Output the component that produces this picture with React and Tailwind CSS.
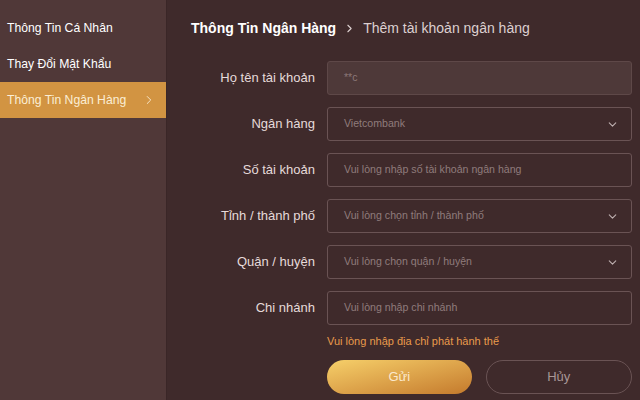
import { ChevronRight, ChevronDown } from 'lucide-react'

const MENU = ['Thông Tin Cá Nhân', 'Thay Đổi Mật Khẩu', 'Thông Tin Ngân Hàng']

const FIELDS = [
  { label: 'Họ tên tài khoản', value: '**c', disabled: true },
  { label: 'Ngân hàng', value: 'Vietcombank', select: true },
  { label: 'Số tài khoản', value: 'Vui lòng nhập số tài khoản ngân hàng' },
  { label: 'Tỉnh / thành phố', value: 'Vui lòng chọn tỉnh / thành phố', select: true },
  { label: 'Quận / huyện', value: 'Vui lòng chọn quận / huyện', select: true },
  { label: 'Chi nhánh', value: 'Vui lòng nhập chi nhánh' },
]

export default function App() {
  return (
    <div
      className="w-[640px] h-[400px] flex bg-[#3f2a2b] overflow-hidden"
      style={{ fontFamily: '"Liberation Sans", Arial, sans-serif' }}
    >
      {/* Sidebar */}
      <div className="w-[167px] shrink-0 bg-[#503838] pt-[10px] border-r border-[#3a2627]">
        {MENU.map((item, i) => {
          const active = i === 2
          return (
            <div
              key={item}
              className={`h-9 flex items-center justify-between pl-[7px] pr-[10px] text-[12.2px] ${
                active ? 'bg-[#d29442] text-[#fbeed5]' : 'text-white'
              }`}
            >
              <span>{item}</span>
              {active && <ChevronRight size={14} strokeWidth={1.5} />}
            </div>
          )
        })}
      </div>

      {/* Main */}
      <div className="flex-1 pl-6 pr-2">
        <div className="h-[58px] flex items-center gap-[5px] text-[14px] pb-[1px]">
          <span className="font-bold text-white">Thông Tin Ngân Hàng</span>
          <ChevronRight size={13} strokeWidth={2} className="text-[#ddd0d0] mx-[2px]" />
          <span className="text-[#ddd0d0]">Thêm tài khoản ngân hàng</span>
        </div>

        <div className="flex flex-col gap-3 pt-[3px]">
          {FIELDS.map(f => (
            <div key={f.label} className="flex items-center">
              <label className="w-[136px] shrink-0 text-right pr-3 text-[13px] text-[#e6dada]">
                {f.label}
              </label>
              <div
                className={`flex-1 h-[34px] rounded-[3px] border flex items-center justify-between pl-4 pr-3 text-[10.6px] ${
                  f.disabled
                    ? 'bg-[#4e3939] border-[#5e4848] text-[#8c7878]'
                    : 'border-[#6a5354] text-[#8f7c7c]'
                }`}
              >
                <span>{f.value}</span>
                {f.select && <ChevronDown size={13} strokeWidth={2} className="text-[#bfb0b0]" />}
              </div>
            </div>
          ))}
        </div>

        <div className="ml-[136px] mt-[8px] text-[11px] text-[#e99b4c]">
          Vui lòng nhập địa chỉ phát hành thể
        </div>

        <div className="ml-[136px] mt-[10px] flex gap-[14px]">
          <button className="flex-1 h-[34px] rounded-full bg-gradient-to-br from-[#f6d06a] to-[#c47a2c] text-[#fbe9cc] text-[13px]">
            Gửi
          </button>
          <button className="flex-1 h-[34px] rounded-full border border-[#6a5354] text-[#a89696] text-[13px]">
            Hủy
          </button>
        </div>
      </div>
    </div>
  )
}
